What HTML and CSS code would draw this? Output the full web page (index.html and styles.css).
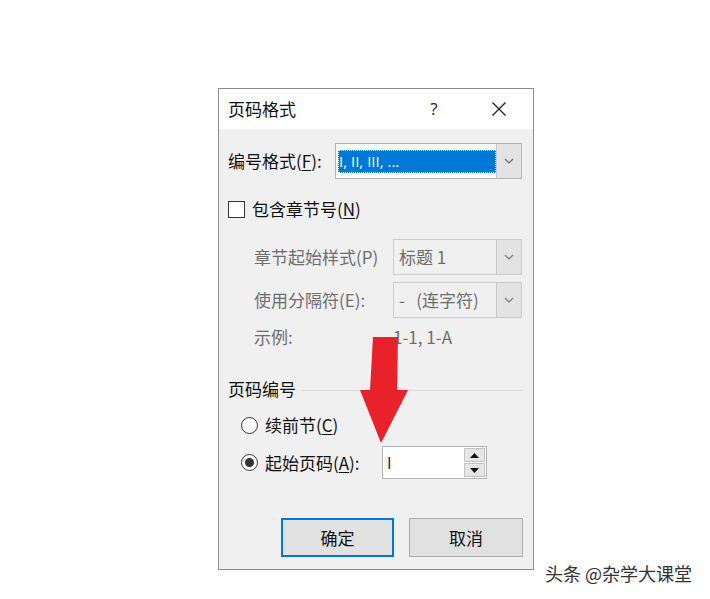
FILE: index.html
```html
<!DOCTYPE html>
<html lang="zh-CN">
<head>
<meta charset="utf-8">
<title>页码格式</title>
<link rel="stylesheet" href="styles.css">
</head>
<body>
<div class="page">
  <div class="dialog">
    <div class="titlebar">
      <span class="title">页码格式</span>
      <span class="help">?</span>
      <span class="close">
        <svg width="16" height="16" viewBox="0 0 16 16"><path d="M1.5 1.5 L14.5 14.5 M14.5 1.5 L1.5 14.5" stroke="#222" stroke-width="1.3" fill="none"/></svg>
      </span>
    </div>
    <div class="body">
      <div class="row r-format">
        <span class="lbl lbl-format">编号格式(<u>F</u>):</span>
        <div class="combo combo-format">
          <div class="field"><span class="sel">I, II, III, ...</span></div>
          <div class="drop"><svg width="10" height="6" viewBox="0 0 10 6"><path d="M1 1 L5 5 L9 1" stroke="#666" stroke-width="1.1" fill="none"/></svg></div>
        </div>
      </div>
      <div class="row r-check">
        <span class="checkbox"></span>
        <span class="lbl">包含章节号(<u>N</u>)</span>
      </div>
      <div class="row r-combo indent">
        <span class="lbl dis lbl-sub">章节起始样式(P)</span>
        <div class="combo combo-dis">
          <div class="field"><span class="val">标题 1</span></div>
          <div class="drop"><svg width="10" height="6" viewBox="0 0 10 6"><path d="M1 1 L5 5 L9 1" stroke="#777" stroke-width="1.1" fill="none"/></svg></div>
        </div>
      </div>
      <div class="row r-combo2 indent">
        <span class="lbl dis lbl-sub">使用分隔符(E):</span>
        <div class="combo combo-dis">
          <div class="field"><span class="val">-&nbsp;&nbsp;&nbsp;(连字符)</span></div>
          <div class="drop"><svg width="10" height="6" viewBox="0 0 10 6"><path d="M1 1 L5 5 L9 1" stroke="#777" stroke-width="1.1" fill="none"/></svg></div>
        </div>
      </div>
      <div class="row r-example indent">
        <span class="lbl dis lbl-sub">示例:</span>
        <span class="lbl dis">1-1, 1-A</span>
      </div>
      <div class="row r-group">
        <span class="lbl">页码编号</span>
        <span class="sep"></span>
      </div>
      <div class="row r-radio1 rindent">
        <span class="radio"></span>
        <span class="lbl">续前节(<u>C</u>)</span>
      </div>
      <div class="row r-radio2 rindent">
        <span class="radio on"></span>
        <span class="lbl lbl-start">起始页码(<u>A</u>):</span>
        <div class="spin">
          <span class="spin-val">I</span>
          <div class="spin-btns">
            <span class="sbtn"><svg width="9" height="5" viewBox="0 0 9 5"><path d="M0 5 L4.5 0 L9 5 Z" fill="#111"/></svg></span>
            <span class="sbtn"><svg width="9" height="5" viewBox="0 0 9 5"><path d="M0 0 L4.5 5 L9 0 Z" fill="#111"/></svg></span>
          </div>
        </div>
      </div>
      <div class="row r-buttons">
        <span class="btn btn-ok">确定</span>
        <span class="btn">取消</span>
      </div>
    </div>
  </div>

  <svg class="arrow" width="60" height="120" viewBox="0 0 60 120">
    <path d="M18 7 L43 7 L42 60 L53 60 L26 113 L5 60 L15 60 Z" fill="#e8212a"/>
  </svg>

  <div class="watermark">头条 @杂学大课堂</div>
</div>
</body>
</html>
```

FILE: styles.css
```css
html, body {
  margin: 0;
  padding: 0;
  background: #ffffff;
}

body {
  font-family: "Noto Sans CJK SC", "Open Sans", sans-serif;
  color: #111;
}

.page {
  position: relative;
  width: 710px;
  height: 599px;
  padding-top: 88px;
  box-sizing: border-box;
}

.dialog {
  margin-left: 218px;
  width: 316px;
  box-sizing: border-box;
  border: 1px solid #8c8c8c;
  background: #f0f0f0;
}

.titlebar {
  height: 40px;
  background: #ffffff;
  display: flex;
  align-items: center;
  padding-left: 9px;
  padding-right: 11px;
}

.title {
  flex: 1;
  font-size: 17px;
  line-height: 22px;
  color: #111;
}

.help {
  width: 30px;
  text-align: center;
  font-size: 17px;
  line-height: 22px;
  font-family: "Open Sans", sans-serif;
  color: #222;
}

.close {
  width: 46px;
  margin-left: 27px;
  display: flex;
  justify-content: center;
  align-items: center;
}

.body {
  padding: 0 10px 12px 9px;
}

.row {
  display: flex;
  align-items: center;
}

.lbl {
  font-size: 17px;
  line-height: 22px;
  white-space: nowrap;
  color: #111;
}

.lbl u {
  text-decoration-thickness: 1px;
  text-underline-offset: 2px;
}

.dis {
  color: #6e6e6e;
}

.r-format { margin-top: 14px; height: 36px; }
.r-check { margin-top: 21px; height: 18px; }
.r-combo { margin-top: 21px; height: 36px; }
.r-combo2 { margin-top: 7px; height: 36px; }
.r-example { margin-top: 8px; height: 22px; }
.r-group { margin-top: 30px; height: 22px; }
.r-radio1 { margin-top: 14px; height: 22px; }
.r-radio2 { margin-top: 10px; height: 33px; }
.r-buttons {
  margin-top: 39px;
  height: 39px;
  justify-content: flex-end;
  gap: 15px;
}

.indent { padding-left: 26px; }
.rindent { padding-left: 13px; }

.lbl-format { width: 107px; }
.lbl-sub { width: 139px; }

.combo {
  display: flex;
  height: 36px;
  box-sizing: border-box;
}

.combo-format {
  width: 187px;
  border: 1px solid #b4b4b4;
  background: #ffffff;
}

.combo-dis {
  width: 129px;
  border: 1px solid #cccccc;
  background: #f0f0f0;
}

.field {
  flex: 1;
  display: flex;
  align-items: center;
  padding-left: 2px;
}

.sel {
  display: block;
  width: 100%;
  height: 23px;
  box-sizing: border-box;
  background: #0078d7;
  color: #ffffff;
  font-family: "Open Sans", sans-serif;
  font-size: 15px;
  line-height: 23px;
  padding-left: 1px;
  outline: 1px dotted #ffffff;
  outline-offset: -1px;
}

.val {
  color: #6e6e6e;
  font-size: 17px;
  line-height: 22px;
  padding-left: 3px;
  white-space: nowrap;
}

.drop {
  width: 24px;
  display: flex;
  align-items: center;
  justify-content: center;
  background: #e3e3e3;
  border-left: 1px solid #c8c8c8;
}

.checkbox {
  width: 17px;
  height: 17px;
  box-sizing: border-box;
  border: 1px solid #333;
  background: #fff;
  margin-right: 7px;
}

.sep {
  flex: 1;
  height: 1px;
  background: #dcdcdc;
  margin-left: 5px;
  margin-top: 2px;
}

.radio {
  width: 17px;
  height: 17px;
  box-sizing: border-box;
  border: 1px solid #333;
  border-radius: 50%;
  background: #fff;
  margin-right: 7px;
  display: flex;
  align-items: center;
  justify-content: center;
}

.radio.on::after {
  content: "";
  width: 9px;
  height: 9px;
  border-radius: 50%;
  background: #333;
}

.lbl-start { width: 117px; }

.spin {
  width: 105px;
  height: 33px;
  box-sizing: border-box;
  border: 1px solid #b4b4b4;
  background: #fff;
  display: flex;
  align-items: center;
  padding-left: 4px;
  padding-right: 1px;
}

.spin-val {
  flex: 1;
  font-family: "Open Sans", sans-serif;
  font-size: 16px;
  line-height: 20px;
  color: #111;
}

.spin-btns {
  display: flex;
  flex-direction: column;
  gap: 1px;
  width: 21px;
}

.sbtn {
  height: 14px;
  box-sizing: border-box;
  border: 1px solid #c4c4c4;
  background: #e6e6e6;
  display: flex;
  align-items: center;
  justify-content: center;
}

.btn {
  width: 114px;
  height: 39px;
  box-sizing: border-box;
  border: 1px solid #adadad;
  background: #e1e1e1;
  display: flex;
  align-items: center;
  justify-content: center;
  font-size: 17px;
  color: #111;
}

.btn-ok {
  width: 113px;
  border: 2px solid #0078d7;
}

.arrow {
  position: absolute;
  left: 355px;
  top: 330px;
}

.watermark {
  position: absolute;
  left: 545px;
  top: 561px;
  font-size: 18px;
  line-height: 24px;
  color: #333;
  white-space: nowrap;
  text-shadow: 1px 1px 0 #fff, -1px -1px 0 #fff, 1px -1px 0 #fff, -1px 1px 0 #fff, 0 0 2px #999;
}
```
